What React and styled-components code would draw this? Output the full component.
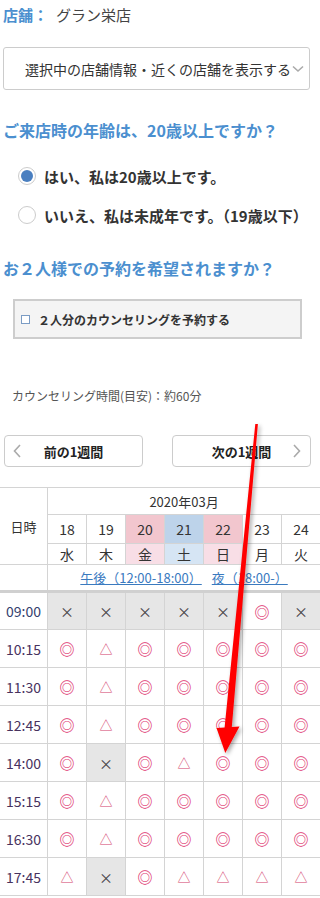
import React from "react";
import styled, { createGlobalStyle } from "styled-components";

const GlobalStyle = createGlobalStyle`
  body {
    margin: 0;
    background: #fff;
    font-family: "Noto Sans CJK JP", "Noto Sans", sans-serif;
    color: #333;
  }
`;

const Page = styled.div`
  position: relative;
  width: 320px;
  overflow: hidden;
`;

const StoreLine = styled.div`
  height: 30px;
  line-height: 30px;
  padding-left: 3px;
  font-size: 15px;
  color: #444;
  white-space: nowrap;
`;

const StoreLabel = styled.span`
  color: #4b8fcf;
  font-weight: 700;
  margin-right: 8px;
`;

const Dropdown = styled.div`
  margin: 17px 0 0 3px;
  width: 307px;
  height: 43px;
  box-sizing: border-box;
  border: 1px solid #ccc;
  border-radius: 3px;
  display: flex;
  align-items: center;
  padding-left: 21px;
  font-size: 14px;
  color: #333;
  white-space: nowrap;
  overflow: hidden;

  svg {
    flex: none;
    margin-left: 1px;
  }
`;

const Question = styled.h2`
  margin: ${(p) => p.$top}px 0 0 3px;
  font-size: 16px;
  line-height: 24px;
  font-weight: 700;
  color: #4b8fcf;
  white-space: nowrap;
`;

const RadioList = styled.div`
  margin-top: 19px;
  display: flex;
  flex-direction: column;
  gap: 9px;
`;

const RadioRow = styled.label`
  display: flex;
  align-items: center;
  gap: 8px;
  height: 30px;
  padding-left: 18px;
  font-size: 15px;
  font-weight: 700;
  color: #333;
  white-space: nowrap;
`;

const RadioDot = styled.span`
  flex: none;
  width: 18px;
  height: 18px;
  box-sizing: border-box;
  border-radius: 50%;
  border: 1px solid #ccc;
  background: #fff;
  display: flex;
  align-items: center;
  justify-content: center;

  &::after {
    content: "";
    width: 12px;
    height: 12px;
    border-radius: 50%;
    background: ${(p) => (p.$checked ? "#4a7fc0" : "transparent")};
  }
`;

const PairBox = styled.label`
  margin: 19px 0 0 13px;
  width: 289px;
  height: 40px;
  box-sizing: border-box;
  border: 2px solid #cdcdcd;
  background: #f4f4f4;
  display: flex;
  align-items: center;
  gap: 8px;
  padding-left: 6px;
  font-size: 12px;
  font-weight: 700;
  color: #333;
  white-space: nowrap;
`;

const CheckSquare = styled.span`
  flex: none;
  width: 7px;
  height: 7px;
  border: 1px solid #7b9cc4;
  background: #fff;
`;

const Duration = styled.p`
  margin: 48px 0 0;
  padding-left: 12px;
  font-size: 12px;
  line-height: 18px;
  color: #555;
`;

const WeekNav = styled.div`
  margin-top: 30px;
  display: flex;
  justify-content: space-between;
  padding: 0 9px 0 4px;
`;

const NavButton = styled.button`
  width: 139px;
  height: 32px;
  box-sizing: border-box;
  border: 1px solid #ccc;
  border-radius: 4px;
  background: #fff;
  padding: 0;
  display: grid;
  grid-template-columns: 24px 1fr 24px;
  align-items: center;
  font-family: inherit;
  font-size: 13px;
  font-weight: 700;
  color: #222;

  svg {
    justify-self: ${(p) => (p.$next ? "end" : "start")};
    margin: ${(p) => (p.$next ? "0 9px 0 0" : "0 0 0 8px")};
  }
`;

const Schedule = styled.table`
  margin: 20px 0 0 -1px;
  width: 321px;
  border-collapse: collapse;
  table-layout: fixed;
  font-size: 13px;
  color: #333;
`;

const Col = styled.col`
  width: ${(p) => p.$w}px;
`;

const Row = styled.tr`
  height: ${(p) => p.$h}px;
`;

const HeadCell = styled.th`
  border: 1px solid #d4d4d4;
  padding: 0;
  text-align: center;
  font-weight: 400;
  font-size: ${(p) => p.$size || 13}px;
  background: ${(p) => p.$bg || "#fff"};
  white-space: nowrap;
`;

const RangeLink = styled.a`
  color: #3a7abf;
  text-decoration: underline;
  font-size: 13px;
  margin: 0 5px;
`;

const TimeCell = styled.th`
  border: 1px solid #d4d4d4;
  border-top-width: ${(p) => (p.$first ? 3 : 1)}px;
  border-top-color: ${(p) => (p.$first ? "#d0d0d0" : "#d4d4d4")};
  padding: 0;
  text-align: center;
  font-weight: 400;
  font-size: 14px;
  color: ${(p) => (p.$first ? "#34416e" : "#48325e")};
`;

const SlotCell = styled.td`
  border: 1px solid #d4d4d4;
  border-top-width: ${(p) => (p.$first ? 3 : 1)}px;
  border-top-color: ${(p) => (p.$first ? "#d0d0d0" : "#d4d4d4")};
  padding: 0;
  text-align: center;
  background: ${(p) => (p.$mark === "×" ? "#e6e6e6" : "#fff")};
  color: ${(p) => (p.$mark === "◎" ? "#e03a74" : p.$mark === "△" ? "#d43f6c" : "#444")};
  font-size: ${(p) => (p.$mark === "◎" ? 15 : p.$mark === "×" ? 14 : 13)}px;
  font-weight: ${(p) => (p.$mark === "◎" ? 700 : 400)};
  line-height: 1;
`;

const ArrowLayer = styled.svg`
  position: absolute;
  left: 0;
  top: 0;
  pointer-events: none;
`;

const days = [
  { d: 18, w: "水" },
  { d: 19, w: "木" },
  { d: 20, w: "金", tone: "red" },
  { d: 21, w: "土", tone: "blue" },
  { d: 22, w: "日", tone: "red" },
  { d: 23, w: "月" },
  { d: 24, w: "火" },
];

const dateBg = { red: "#f2c6ce", blue: "#bdd3ea" };
const weekBg = { red: "#f8dee6", blue: "#d6e5f4" };

const slots = [
  ["09:00", "×××××◎×"],
  ["10:15", "◎△◎◎◎◎◎"],
  ["11:30", "◎△◎◎◎◎◎"],
  ["12:45", "◎△◎◎◎◎◎"],
  ["14:00", "◎×◎△◎◎◎"],
  ["15:15", "◎△◎◎◎◎◎"],
  ["16:30", "◎△◎◎◎◎◎"],
  ["17:45", "△×◎△△△△"],
];

const Chevron = ({ dir }) => {
  const d = {
    down: "M1 1.5 L6 6 L11 1.5",
    left: "M7 1 L1.5 7 L7 13",
    right: "M1 1 L6.5 7 L1 13",
  }[dir];
  const size = dir === "down" ? [12, 8] : [8, 14];
  return (
    <svg width={size[0]} height={size[1]} viewBox={`0 0 ${size[0]} ${size[1]}`}>
      <path d={d} fill="none" stroke="#aaa" strokeWidth="1.6" />
    </svg>
  );
};

const Arrow = () => (
  <ArrowLayer width="320" height="898" viewBox="0 0 320 898">
    <defs>
      <filter id="arrowShadow" x="-50%" y="-10%" width="200%" height="120%">
        <feDropShadow dx="2" dy="2" stdDeviation="2" floodColor="#000" floodOpacity="0.35" />
      </filter>
    </defs>
    <polygon
      points="255.3,424 257.9,424 231.8,727 239.5,726.5 225.3,753 216.5,728 224.6,727.5"
      fill="#ff0000"
      filter="url(#arrowShadow)"
    />
  </ArrowLayer>
);

const App = () => {
  return (
    <>
      <GlobalStyle />
      <Page>
        <StoreLine>
          <StoreLabel>店舗：</StoreLabel>グラン栄店
        </StoreLine>
        <Dropdown>
          選択中の店舗情報・近くの店舗を表示する
          <Chevron dir="down" />
        </Dropdown>

        <Question $top={28}>ご来店時の年齢は、20歳以上ですか？</Question>
        <RadioList>
          <RadioRow>
            <RadioDot $checked />
            はい、私は20歳以上です。
          </RadioRow>
          <RadioRow>
            <RadioDot />
            いいえ、私は未成年です。（19歳以下）
          </RadioRow>
        </RadioList>

        <Question $top={26}>お２人様での予約を希望されますか？</Question>
        <PairBox>
          <CheckSquare />
          ２人分のカウンセリングを予約する
        </PairBox>

        <Duration>カウンセリング時間(目安)：約60分</Duration>

        <WeekNav>
          <NavButton>
            <Chevron dir="left" />
            <span>前の1週間</span>
            <span />
          </NavButton>
          <NavButton $next>
            <span />
            <span>次の1週間</span>
            <Chevron dir="right" />
          </NavButton>
        </WeekNav>

        <Schedule>
          <colgroup>
            <Col $w={48} />
            {days.map((day) => (
              <Col key={day.d} $w={39} />
            ))}
          </colgroup>
          <thead>
            <Row $h={27}>
              <HeadCell rowSpan={3}>日時</HeadCell>
              <HeadCell colSpan={7}>2020年03月</HeadCell>
            </Row>
            <Row $h={29}>
              {days.map((day) => (
                <HeadCell key={day.d} $size={14} $bg={dateBg[day.tone]}>
                  {day.d}
                </HeadCell>
              ))}
            </Row>
            <Row $h={20}>
              {days.map((day) => (
                <HeadCell key={day.d} $size={14} $bg={weekBg[day.tone]}>
                  {day.w}
                </HeadCell>
              ))}
            </Row>
            <Row $h={27}>
              <HeadCell />
              <HeadCell colSpan={7}>
                <RangeLink href="#pm">午後（12:00-18:00）</RangeLink>
                <RangeLink href="#night">夜（18:00-）</RangeLink>
              </HeadCell>
            </Row>
          </thead>
          <tbody>
            {slots.map(([time, marks], i) => (
              <Row key={time} $h={38}>
                <TimeCell $first={i === 0}>{time}</TimeCell>
                {[...marks].map((m, j) => (
                  <SlotCell key={j} $mark={m} $first={i === 0}>
                    {m}
                  </SlotCell>
                ))}
              </Row>
            ))}
          </tbody>
        </Schedule>
        <Arrow />
      </Page>
    </>
  );
};

export default App;
